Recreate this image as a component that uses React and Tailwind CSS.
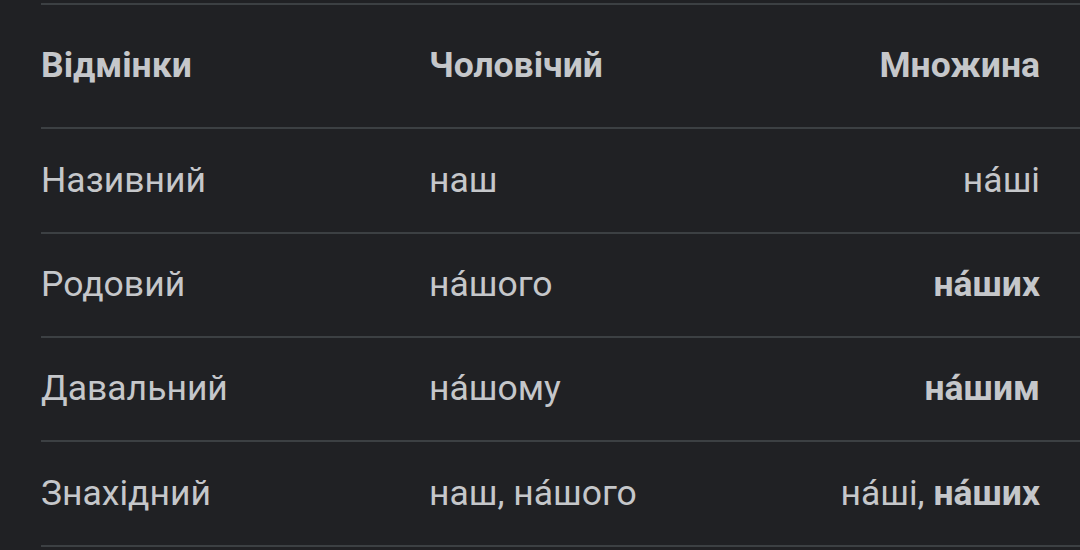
import React from 'react';

const rows = [
  { label: 'Називний', male: 'наш', plural: [{ t: 'на́ші' }], h: 'h-[105px]' },
  { label: 'Родовий', male: 'на́шого', plural: [{ t: 'на́ших', b: true }], h: 'h-[104px]' },
  { label: 'Давальний', male: 'на́шому', plural: [{ t: 'на́шим', b: true }], h: 'h-[104px]' },
  { label: 'Знахідний', male: 'наш, на́шого', plural: [{ t: 'на́ші, ' }, { t: 'на́ших', b: true }], h: 'h-[105px]' },
];

const App = () => {
  return (
    <div
      className="w-[1080px] h-[550px] overflow-hidden bg-[#202124] text-[#c5c7ca] pt-[3px]"
      style={{ fontFamily: 'Roboto, "Noto Sans", sans-serif' }}
    >
      <div className="ml-[41px] border-t-2 border-[#3c4043]">
        <div className="grid grid-cols-[388px_1fr_auto] items-center h-[124px] border-b-2 border-[#3c4043] text-[35.5px] font-bold pr-[40px]">
          <div>Відмінки</div>
          <div>Чоловічий</div>
          <div className="text-right">Множина</div>
        </div>
        {rows.map((r) => (
          <div
            key={r.label}
            className={`grid grid-cols-[388px_1fr_auto] items-center ${r.h} border-b-2 border-[#3c4043] text-[35.5px] pr-[40px]`}
          >
            <div>{r.label}</div>
            <div>{r.male}</div>
            <div className="text-right">
              {r.plural.map((p, i) => (
                <span key={i} className={p.b ? 'font-bold' : ''}>
                  {p.t}
                </span>
              ))}
            </div>
          </div>
        ))}
      </div>
    </div>
  );
};

export default App;
